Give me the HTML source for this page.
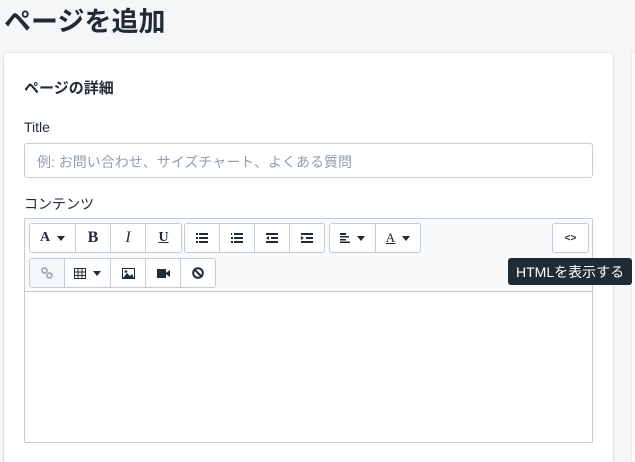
<!DOCTYPE html>
<html style="width:635px;height:462px;overflow:hidden"><head><meta charset="utf-8"><style>
*{box-sizing:border-box;margin:0;padding:0}
body{width:635px;height:462px;overflow:hidden;background:#f4f6f8;font-family:"Liberation Sans","Noto Sans CJK JP",sans-serif;color:#212b36;position:relative}
h1{position:absolute;left:4px;top:0px;font-size:27px;font-weight:700;color:#212b36}
.card{position:absolute;left:4px;top:53px;width:609px;height:420px;background:#fff;border-radius:4px;box-shadow:0 0 0 1px rgba(63,63,68,.06),0 1px 3px rgba(63,63,68,.15)}
.card2{position:absolute;left:632px;top:53px;width:20px;height:420px;background:#fff;box-shadow:0 0 0 1px rgba(63,63,68,.06)}
.h2{position:absolute;left:24px;top:77px;font-size:15px;font-weight:700}
.lbl{position:absolute;left:24px;font-size:14px}
.inp{position:absolute;left:24px;top:143px;width:569px;height:35px;border:1px solid #c4cdd5;border-radius:3px;font-size:14px;color:#919eab;padding:8px 12px}
.ed{position:absolute;left:24px;top:218px;width:569px;height:225px;border:1px solid #c4cdd5;border-radius:2px}
.tb{position:absolute;left:0;top:0;width:567px;height:73px;background:#f9fafb;border-bottom:1px solid #c4cdd5}
.g{position:absolute;display:flex;border:1px solid #c4cdd5;border-radius:3px;background:#fff;height:30px}
.g div{height:28px;border-right:1px solid #c4cdd5;display:flex;align-items:center;justify-content:center;font-size:14px;color:#212b36}
.g div:last-child{border-right:none}
.car{display:inline-block;width:0;height:0;border-left:4px solid transparent;border-right:4px solid transparent;border-top:5px solid #212b36;margin-left:7px}
.tip{position:absolute;left:508px;top:258px;width:124px;height:27px;background:#212b36;color:#fff;border-radius:3px;font-size:14px;padding:4px 0 0 8px;white-space:nowrap}
</style></head><body>
<h1>ページを追加</h1>
<div class="card"></div><div class="card2"></div>
<div class="h2">ページの詳細</div>
<div class="lbl" style="top:119px">Title</div>
<div class="inp">例: お問い合わせ、サイズチャート、よくある質問</div>
<div class="lbl" style="top:194px">コンテンツ</div>
<div class="ed"><div class="tb">
<div class="g" style="left:4px;top:4px"><div style="width:46px;font-family:'Liberation Serif';font-weight:700">A<span class="car"></span></div><div style="width:35px;font-family:'Liberation Serif';font-weight:700;font-size:16px">B</div><div style="width:35px;font-family:'Liberation Serif';font-style:italic;font-size:16px">I</div><div style="width:35px;font-family:'Liberation Serif';font-weight:700;text-decoration:underline">U</div></div>
<div class="g" style="left:159px;top:4px">
<div style="width:35px"><svg width="12" height="10"><g fill="#212b36"><rect x="0" y="0" width="2" height="2"/><rect x="0" y="4" width="2" height="2"/><rect x="0" y="8" width="2" height="2"/><rect x="3" y="0" width="9" height="2"/><rect x="3" y="4" width="9" height="2"/><rect x="3" y="8" width="9" height="2"/></g></svg></div>
<div style="width:35px"><svg width="12" height="10"><g fill="#212b36"><rect x="0" y="0" width="1" height="2"/><rect x="0" y="4" width="2" height="2"/><rect x="0" y="8" width="2" height="2"/><rect x="3" y="0" width="9" height="2"/><rect x="3" y="4" width="9" height="2"/><rect x="3" y="8" width="9" height="2"/></g></svg></div>
<div style="width:35px"><svg width="12" height="10"><g fill="#212b36"><rect x="0" y="0" width="12" height="2"/><rect x="5" y="4" width="7" height="2"/><rect x="0" y="8" width="12" height="2"/><path d="M0 5 L3 3 L3 7Z"/></g></svg></div>
<div style="width:34px"><svg width="12" height="10"><g fill="#212b36"><rect x="0" y="0" width="12" height="2"/><rect x="5" y="4" width="7" height="2"/><rect x="0" y="8" width="12" height="2"/><path d="M3 5 L0 3 L0 7Z"/></g></svg></div></div>
<div class="g" style="left:304px;top:4px"><div style="width:46px"><svg width="10" height="10"><g fill="#212b36"><rect y="0" width="6" height="2"/><rect y="3" width="9" height="1.5"/><rect y="6" width="6" height="1.5"/><rect y="8.5" width="10" height="1.5"/></g></svg><span class="car"></span></div><div style="width:44px;font-size:13px"><span style="text-decoration:underline;font-family:'Liberation Serif'">A</span><span class="car"></span></div></div>
<div class="g" style="left:527px;top:4px"><div style="width:35px;font-size:10px;font-weight:700">&lt;&gt;</div></div>
<div class="g" style="left:4px;top:39px"><div style="width:35px;background:#f4f6f8;color:#919eab"><svg width="12" height="12"><circle cx="3.5" cy="3.5" r="2.5" fill="none" stroke="#919eab" stroke-width="1.5"/><circle cx="8.5" cy="8.5" r="2.5" fill="none" stroke="#919eab" stroke-width="1.5"/></svg></div><div style="width:46px"><svg width="12" height="11"><g fill="none" stroke="#212b36"><rect x=".5" y=".5" width="11" height="10"/><path d="M4 0V11M8 0V11M0 4H12M0 7.5H12"/></g></svg><span class="car"></span></div><div style="width:35px"><svg width="13" height="11"><rect x=".5" y=".5" width="12" height="10" fill="none" stroke="#212b36"/><path d="M1 10 L5 5 L8 8 L10 6 L12 10Z" fill="#212b36"/><circle cx="4" cy="3.5" r="1.3" fill="#212b36"/></svg></div><div style="width:35px"><svg width="13" height="9"><rect x="0" y="0" width="9" height="9" fill="#212b36"/><path d="M8 4.5 L13 1 L13 8Z" fill="#212b36"/></svg></div><div style="width:34px"><svg width="12" height="12"><circle cx="6" cy="6" r="4.8" fill="none" stroke="#212b36" stroke-width="2"/><path d="M2.8 2.8 L9.2 9.2" stroke="#212b36" stroke-width="2"/></svg></div></div>
</div></div>
<div class="tip">HTMLを表示する</div>
</body></html>
